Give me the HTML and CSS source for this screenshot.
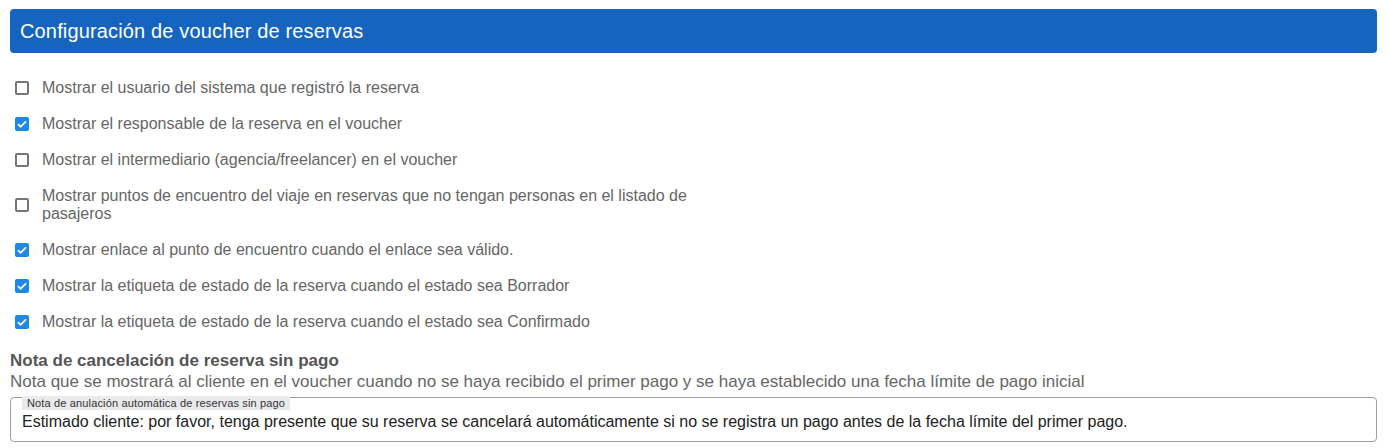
FILE: index.html
```html
<!DOCTYPE html>
<html>
<head>
    <title>Configuración de voucher de reservas</title>
    <link rel="stylesheet" href="styles.css">
</head>
<body>
    <div class="panel">
        <div class="panel-header">Configuración de voucher de reservas</div>

        <div class="options">
            <label class="option">
                <span class="box"></span>
                <span>Mostrar el usuario del sistema que registró la reserva</span>
            </label>
            <label class="option">
                <span class="box checked"><svg viewBox="0 0 14 14"><path d="M3 7.2l2.6 2.6L11 4.4"/></svg></span>
                <span>Mostrar el responsable de la reserva en el voucher</span>
            </label>
            <label class="option">
                <span class="box"></span>
                <span>Mostrar el intermediario (agencia/freelancer) en el voucher</span>
            </label>
            <label class="option">
                <span class="box"></span>
                <span>Mostrar puntos de encuentro del viaje en reservas que no tengan personas en el listado de pasajeros</span>
            </label>
            <label class="option">
                <span class="box checked"><svg viewBox="0 0 14 14"><path d="M3 7.2l2.6 2.6L11 4.4"/></svg></span>
                <span>Mostrar enlace al punto de encuentro cuando el enlace sea válido.</span>
            </label>
            <label class="option">
                <span class="box checked"><svg viewBox="0 0 14 14"><path d="M3 7.2l2.6 2.6L11 4.4"/></svg></span>
                <span>Mostrar la etiqueta de estado de la reserva cuando el estado sea Borrador</span>
            </label>
            <label class="option">
                <span class="box checked"><svg viewBox="0 0 14 14"><path d="M3 7.2l2.6 2.6L11 4.4"/></svg></span>
                <span>Mostrar la etiqueta de estado de la reserva cuando el estado sea Confirmado</span>
            </label>
        </div>

        <div class="note">
            <div class="note-title">Nota de cancelación de reserva sin pago</div>
            <div class="note-help">Nota que se mostrará al cliente en el voucher cuando no se haya recibido el primer pago y se haya establecido una fecha límite de pago inicial</div>
            <div class="field">
                <span class="field-label">Nota de anulación automática de reservas sin pago</span>
                <input type="text" class="field-input" value="Estimado cliente: por favor, tenga presente que su reserva se cancelará automáticamente si no se registra un pago antes de la fecha límite del primer pago.">
            </div>
        </div>
    </div>
</body>
</html>
```

FILE: styles.css
```css
body {
    margin: 0;
    background-color: #ffffff;
    font-family: "Liberation Sans", Arial, sans-serif;
}
.panel {
    padding: 9px 12px 0 10px;
}
.panel-header {
    background-color: #1565c0;
    color: #ffffff;
    font-size: 20px;
    letter-spacing: 0.15px;
    height: 44px;
    line-height: 44px;
    padding: 0 10px;
    border-radius: 4px;
}
.options {
    display: flex;
    flex-direction: column;
    gap: 12px;
    padding-top: 23px;
}
.option {
    display: flex;
    align-items: center;
    padding: 3px 0;
    max-width: 700px;
    color: #666666;
    font-size: 16px;
    line-height: 18px;
    cursor: pointer;
}
.box {
    flex: none;
    box-sizing: border-box;
    width: 14px;
    height: 14px;
    margin: 0 13px 0 5px;
    border: 2px solid #767676;
    border-radius: 2px;
    background-color: #ffffff;
}
.box.checked {
    border: none;
    background-color: #1e88e5;
}
.box svg {
    display: block;
    width: 14px;
    height: 14px;
}
.box svg path {
    fill: none;
    stroke: #ffffff;
    stroke-width: 1.8;
}
.note {
    margin-top: 17px;
}
.note-title {
    color: #555555;
    font-size: 17px;
    font-weight: bold;
    line-height: 20px;
}
.note-help {
    color: #666666;
    font-size: 17px;
    line-height: 22px;
}
.field {
    position: relative;
    margin-top: 4px;
    border: 1px solid #9e9e9e;
    border-radius: 4px;
    height: 43px;
}
.field-label {
    position: absolute;
    left: 11px;
    top: -2px;
    padding: 0 5px;
    background-color: #e8eaeb;
    color: #333333;
    font-size: 11px;
    letter-spacing: 0.15px;
    line-height: 14px;
}
.field-input {
    border: none;
    outline: none;
    background: transparent;
    width: 100%;
    box-sizing: border-box;
    padding: 15px 11px 0;
    font-family: "Liberation Sans", Arial, sans-serif;
    font-size: 16px;
    color: #222222;
}
```
